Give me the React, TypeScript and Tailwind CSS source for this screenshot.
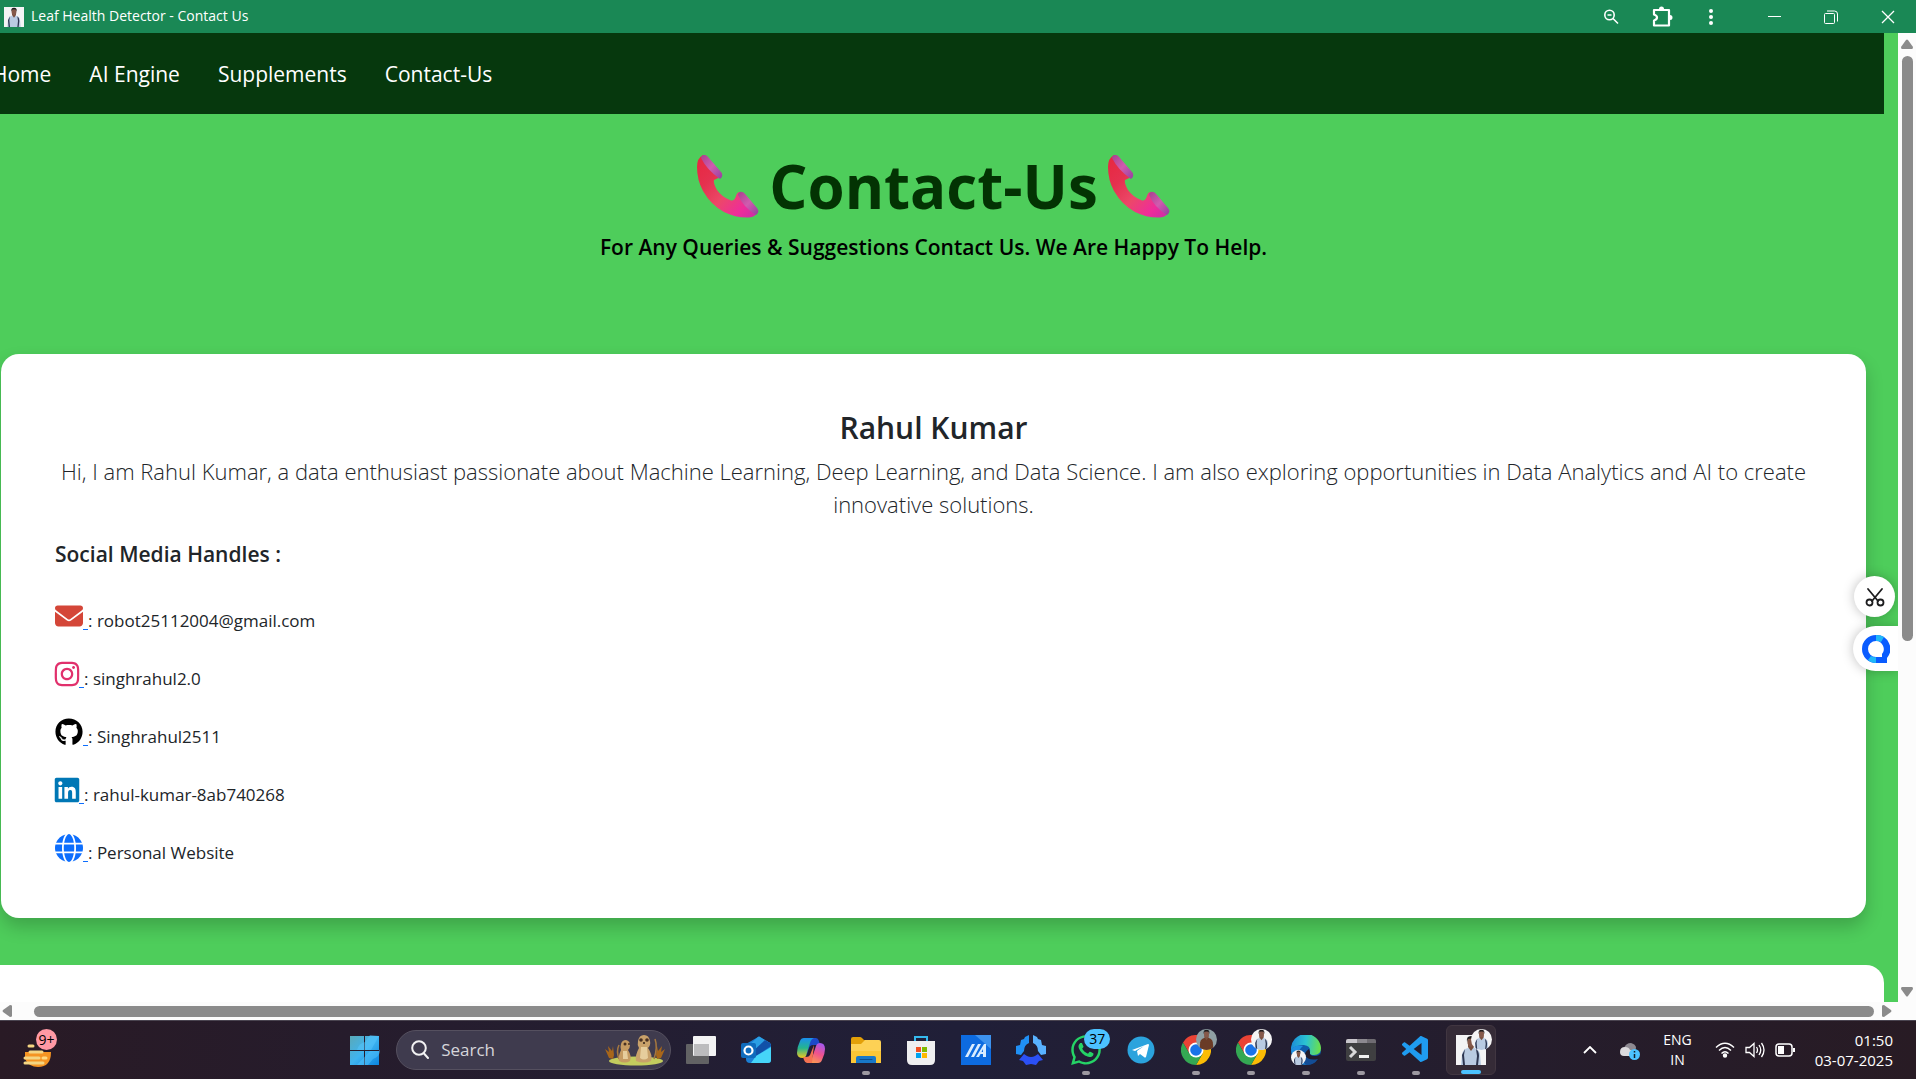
import React from "react";
import { FaEnvelope, FaGithub, FaGlobe, FaInstagram, FaLinkedin, FaWhatsapp } from "react-icons/fa6";
import { VscVscode } from "react-icons/vsc";

const navLinks = ["Home", "AI Engine", "Supplements", "Contact-Us"];

const socials = [
  { label: "Email", text: "robot25112004@gmail.com", icon: <FaEnvelope className="h-7 w-7 text-[#d44638]" /> },
  { label: "Instagram", text: "singhrahul2.0", icon: <FaInstagram className="-mx-0.5 h-7 w-7 text-[#e1306c]" /> },
  { label: "GitHub", text: "Singhrahul2511", icon: <FaGithub className="h-7 w-7 text-black" /> },
  { label: "LinkedIn", text: "rahul-kumar-8ab740268", icon: <FaLinkedin className="-mx-0.5 h-7 w-7 text-[#0077b5]" /> },
  { label: "Website", text: "Personal Website", icon: <FaGlobe className="h-7 w-7 text-[#0d6efd]" /> },
];

function Portrait({ className, brown = false }: { className: string; brown?: boolean }) {
  return (
    <svg viewBox="0 0 30 30" className={className} aria-hidden="true">
      <rect width="30" height="30" fill={brown ? "#8fa0a4" : "#f4f4f5"} />
      <path d="M5 30 6 19Q7 14 12 13h6q5 1 6 6l1 11Z" fill={brown ? "#6a3b26" : "#b9cbe2"} />
      {!brown && <path d="M9 14 8 20l1 10H7L6 20Z M20 14q3 2 3 7l-1 9h-2l1-9Z" fill="#2c3550" />}
      <path d="m12 12 3 4 3-4v-3h-6Z" fill="#79503f" />
      <ellipse cx="15" cy="7" rx="3.6" ry="5" fill="#85594a" />
      <path d="M11 7q-1-6 4-6t4 6l-1-3q-3-1-6 0Z" fill="#1d1a1b" />
    </svg>
  );
}

function Phone() {
  return (
    <svg viewBox="0 0 62 63" className="h-[63px] w-[62px]" aria-hidden="true">
      <defs>
        <linearGradient id="handset" x1="0" y1="0" x2="1" y2="1">
          <stop offset="0" stopColor="#e8263f" />
          <stop offset="0.3" stopColor="#e5314f" />
          <stop offset="0.55" stopColor="#ec4868" />
          <stop offset="0.8" stopColor="#ee2c9b" />
          <stop offset="1" stopColor="#c52fa8" />
        </linearGradient>
        <linearGradient id="cap" x1="0" y1="0" x2="1" y2="1">
          <stop offset="0" stopColor="#a8408f" />
          <stop offset="0.5" stopColor="#d05cae" />
          <stop offset="1" stopColor="#9440a0" />
        </linearGradient>
      </defs>
      <path d="M6 0Q0 3 0 12q0 13 6 24 8 14 21 21 12 6 25 5.500 6 0 9.500-6.500L43 37q-3 0-4 4-2 6-6 4-8-3-13-10-4-7-3-10 6-2 8-6.500Z" fill="url(#handset)" />
      <path d="M6 0q3-1 6 3l12 14q3 4-1 7Q10 15 4 3q0-2 2-3Z" fill="url(#cap)" />
      <path d="M43 37q3-1 6 3l11 13q3 4-1 7-13-8-18-20 0-2 2-3Z" fill="url(#cap)" />
    </svg>
  );
}

function Chrome() {
  return (
    <svg viewBox="0 0 30 30" className="h-[30px] w-[30px]" aria-hidden="true">
      <path d="M2 7.500A15 15 0 0 1 28 7.500H15L8.500 18.700Z" fill="#ea4335" />
      <path d="M28 7.500A15 15 0 0 1 15 30l6.500-11.200L15 7.500Z" fill="#fbbc05" />
      <path d="M15 30A15 15 0 0 1 2 7.500l6.500 11.200L21.500 18.800Z" fill="#34a853" />
      <circle cx="15" cy="15" r="7.500" fill="#fff" />
      <circle cx="15" cy="15" r="5.800" fill="#1a73e8" />
    </svg>
  );
}

function Edge() {
  return (
    <svg viewBox="0 0 30 30" className="h-[30px] w-[30px]" aria-hidden="true">
      <defs>
        <linearGradient id="edgeTop" x1="0" y1="0.300" x2="1" y2="0.400">
          <stop offset="0" stopColor="#1b8ad8" />
          <stop offset="0.5" stopColor="#2bc3d2" />
          <stop offset="1" stopColor="#6be04a" />
        </linearGradient>
      </defs>
      <circle cx="15" cy="15" r="15" fill="#0f5cab" />
      <path d="M0 15A15 15 0 0 1 30 13q0 7-7 7-5 0-4-3 1-6-6-7Q4 10 0 15Z" fill="url(#edgeTop)" />
      <path d="M0 15q4-6 12-4-5 4-4 9 2 8 10 9Q2 32 0 15Z" fill="#1f8fe0" />
      <path d="M19 17q-1 4 5 4 4 0 6-3-1 5-4 8-9 2-12-4-1-5 4-8Z" fill="#231c2b" />
      <path d="M14 20q3 6 13 4-4 6-11 6-6-2-2-10Z" fill="#134d96" />
    </svg>
  );
}

type Task = { name: string; icon: React.ReactNode; running?: boolean; active?: boolean; badge?: React.ReactNode };

const tasks: Task[] = [
  {
    name: "Task View",
    icon: (
      <svg viewBox="0 0 30 30" className="h-[30px] w-[30px]">
        <rect y="9" width="23" height="20" rx="1" fill="#626264" />
        <rect x="7" y="1" width="23" height="20" rx="1" fill="#f3f3f4" />
        <path d="M8 9h15v12H8Z" fill="#bcbcbe" />
      </svg>
    ),
  },
  {
    name: "Outlook",
    icon: (
      <svg viewBox="0 0 30 30" className="h-[30px] w-[30px]">
        <path d="M5 9 17 2q1-1 2 0l10 6q1 1 1 2v15q0 3-3 3H9q-4 0-4-4Z" fill="#1b7fd4" />
        <path d="M17 2q1-1 2 0l10 6-14 9-8-6Z" fill="#2b9fe4" />
        <path d="m29 8 1 3L15 21l-4-4 13-12Z" fill="#1151a8" />
        <path d="M30 12v13q0 3-3 3H10l5-7Z" fill="#46d5f8" />
        <rect y="8" width="15" height="15" rx="2" fill="#0f6cbd" />
        <circle cx="7.500" cy="15.500" r="4" fill="none" stroke="#fff" strokeWidth="2.200" />
      </svg>
    ),
  },
  {
    name: "Copilot",
    icon: (
      <svg viewBox="0 0 30 30" className="h-[30px] w-[30px]">
        <defs>
          <linearGradient id="copL" x1="0" y1="0" x2="0" y2="1">
            <stop offset="0" stopColor="#1a8ff0" />
            <stop offset="0.5" stopColor="#25b58d" />
            <stop offset="1" stopColor="#f2c81f" />
          </linearGradient>
          <linearGradient id="copR" x1="0.700" y1="0" x2="0.300" y2="1">
            <stop offset="0" stopColor="#a558ee" />
            <stop offset="0.5" stopColor="#f0528c" />
            <stop offset="1" stopColor="#fb9a52" />
          </linearGradient>
        </defs>
        <path d="M14 3h6q2 0 3 3l1 4h-7q-3 0-4 3l-3 9Z" fill="#1d49c8" />
        <path d="M8 3h10q-3 1-4 5l-4 13q-1 2-3 2-6 0-6-5 0-6 3-12 1-3 4-3Z" fill="url(#copL)" />
        <path d="M22 28H12q3-1 4-5l4-12q1-3 4-3 5 0 5 6 0 5-3 11-1 3-4 3Z" fill="url(#copR)" />
        <path d="M16 28h-5q-2 0-3-3l-1-3h3q3 0 4-2l4-10Z" fill="#f47252" />
      </svg>
    ),
  },
  {
    name: "File Explorer",
    running: true,
    icon: (
      <svg viewBox="0 0 30 30" className="h-[30px] w-[30px]">
        <path d="M0 4q0-2 2-2h7q1 0 2 1l2 2H0Z M0 5h14v5H0Z" fill="#e3a008" />
        <path d="M0 9h10l4-4h14q2 0 2 2v21H0Z" fill="#fdd155" />
        <path d="M0 16h30v12H0Z" fill="#fbc636" />
        <path d="M5 28v-5q0-2 2-2h16q2 0 2 2v5Z" fill="#1878c8" />
        <path d="M9 24.500h12" stroke="#0b4f91" strokeLinecap="round" />
      </svg>
    ),
  },
  {
    name: "Microsoft Store",
    icon: (
      <svg viewBox="0 0 30 30" className="h-[30px] w-[30px]">
        <path d="M9 8V2h12v6" fill="none" stroke="#35b9ee" strokeWidth="2" />
        <path d="M1 6h28v19q0 5-5 5H6q-5 0-5-5Z" fill="#efeff0" />
        <path d="M10 12h5v5h-5Z" fill="#f25022" />
        <path d="M16 12h5v5h-5Z" fill="#7fba00" />
        <path d="M10 18h5v5h-5Z" fill="#00a4ef" />
        <path d="M16 18h5v5h-5Z" fill="#ffb900" />
      </svg>
    ),
  },
  {
    name: "MyASUS",
    icon: (
      <svg viewBox="0 0 30 30" className="h-[30px] w-[30px]">
        <rect width="30" height="30" fill="#0d6be0" />
        <path d="M14 0h16v14Z" fill="#3d92ee" />
        <path d="m4 22 7-13h3L7 22Zm6 0 7-13h3l-7 13Zm5 0 8-13h2v13h-3v-8l-4 8Zm3-5h6v2h-7Z" fill="#d9ecff" />
      </svg>
    ),
  },
  {
    name: "Armoury",
    icon: (
      <svg viewBox="0 0 30 30" className="h-[30px] w-[30px]">
        <path d="M9 2l4-2v8q-5 2-5 8l-3 4-5-1v-8l4-1 1-5 3-1Z" fill="#2090f5" />
        <path d="M21 2l-4-2v8q5 2 5 8l3 4 5-1v-8l-4-1-1-5-3-1Z" fill="#58b2ff" />
        <path d="m8 19 3 2q4 2 8 0l3-2 5 6-4 1-3 4-5-1-5 1-3-4-4-1Z" fill="#2b50f5" />
      </svg>
    ),
  },
  {
    name: "WhatsApp",
    running: true,
    icon: <FaWhatsapp className="h-[34px] w-[34px] shrink-0 text-[#25d366]" />,
    badge: (
      <span className="absolute -top-[6px] left-[13px] flex h-5 w-[26px] items-center justify-center rounded-full bg-[#4cc2ff] text-sm leading-5 text-black">37</span>
    ),
  },
  {
    name: "Telegram",
    icon: (
      <svg viewBox="0 0 28 28" className="h-7 w-7">
        <circle cx="14" cy="14" r="13.500" fill="#2ba3dd" />
        <path d="m5 14 16-6q1 0 1 1l-3 12q-1 1-2 0l-4-3-2 2-1-5 7-5-9 5-3-1Z" fill="#fff" />
      </svg>
    ),
  },
  { name: "Chrome work profile", running: true, icon: <Chrome />, badge: <Portrait brown className="absolute -top-[6px] left-[15px] h-[21px] w-[21px] rounded-full" /> },
  { name: "Chrome", running: true, icon: <Chrome />, badge: <Portrait className="absolute -top-[6px] left-[15px] h-[21px] w-[21px] rounded-full" /> },
  { name: "Edge", running: true, icon: <Edge />, badge: <Portrait className="absolute top-[15px] left-0 h-[15px] w-[15px] rounded-full" /> },
  {
    name: "Terminal",
    running: true,
    icon: (
      <svg viewBox="0 0 30 30" className="h-[30px] w-[30px]">
        <rect y="4" width="30" height="22" rx="2" fill="#3f3f41" />
        <path d="M0 8V6q0-2 2-2h9v4Z" fill="#c9c6cc" />
        <path d="M11 4h10v4H11Z" fill="#8c898f" />
        <path d="M21 4h7q2 0 2 2v2h-9Z" fill="#6f6c72" />
        <path d="m4 12 5 5-5 5" fill="none" stroke="#d8d8d9" strokeWidth="3" />
        <path d="M13 20h10v3H13Z" fill="#f1f1f1" />
      </svg>
    ),
  },
  { name: "Visual Studio Code", running: true, icon: <VscVscode className="h-8 w-8 shrink-0 text-[#1f9cf0]" /> },
  {
    name: "Leaf Health Detector",
    active: true,
    icon: <Portrait className="h-[30px] w-[30px]" />,
    badge: <Portrait className="absolute -top-[6px] left-[15px] h-[21px] w-[21px] rounded-full" />,
  },
];

function TitleBar() {
  return (
    <header className="flex h-[33px] shrink-0 items-center bg-[#1a8855] text-white">
      <Portrait className="ml-1 h-5 w-5" />
      <span className="mb-0.5 ml-[7px] text-sm">Leaf Health Detector - Contact Us</span>
      <div className="mr-[21px] ml-auto flex items-center">
        <button aria-label="Zoom" className="mr-8">
          <svg viewBox="0 0 16 16" className="h-4 w-4" fill="none" stroke="currentColor" strokeWidth="1.600">
            <circle cx="6.500" cy="6" r="4.700" />
            <path d="m10 9.500 5 5M4.500 6h4" />
          </svg>
        </button>
        <button aria-label="Extensions" className="mr-[35px]">
          <svg viewBox="0 0 22 22" className="h-[22px] w-[22px]" fill="none" stroke="currentColor" strokeWidth="2.200" strokeLinejoin="round">
            <path d="M3 4h15v15.500H3v-5q3-1 3-3t-3-3Z" />
            <path d="M8 3q0-2.500 2.500-2.500T13 3ZM19 9q2.500 0 2.500 2.500T19 14Z" fill="currentColor" stroke="none" />
          </svg>
        </button>
        <button aria-label="Menu" className="mr-[54px]">
          <svg viewBox="0 0 6 18" className="h-[18px] w-[6px]" fill="currentColor">
            <circle cx="3" cy="3" r="2" />
            <circle cx="3" cy="9" r="2" />
            <circle cx="3" cy="15" r="2" />
          </svg>
        </button>
        <button aria-label="Minimize" className="mr-[42px]">
          <svg viewBox="0 0 14 14" className="h-[14px] w-[14px]" stroke="currentColor">
            <path d="M0 6.500h13" />
          </svg>
        </button>
        <button aria-label="Restore" className="mr-[43px]">
          <svg viewBox="0 0 14 14" className="h-[14px] w-[14px]" fill="none" stroke="currentColor">
            <rect x="0.500" y="3.500" width="10" height="10" rx="1" />
            <path d="M3 1h7.500q3 0 3 3v7.500" />
          </svg>
        </button>
        <button aria-label="Close">
          <svg viewBox="0 0 14 14" className="h-[14px] w-[14px]" stroke="currentColor" strokeWidth="1.300">
            <path d="m1 1 12 12M13 1 1 13" />
          </svg>
        </button>
      </div>
    </header>
  );
}

function ContactPage() {
  return (
    <div className="relative min-w-0 flex-1 overflow-hidden bg-[#4ecd5b]">
      <nav className="mr-[14px] flex h-[81px] items-center gap-[38px] bg-[#06380d] pt-0.5 text-[21px] text-white">
        {navLinks.map((l) => (
          <a key={l} href="#" className="first:-ml-2">{l}</a>
        ))}
      </nav>
      <section className="mr-8 ml-px flex flex-col items-center pt-9 text-center">
        <h1 className="flex items-center gap-[10px] text-6xl leading-[72px] font-bold text-[#033303]">
          <Phone />
          Contact-Us
          <Phone />
        </h1>
        <p className="mt-[9px] text-[21px] leading-[33px] font-semibold text-black">
          For Any Queries &amp; Suggestions Contact Us. We Are Happy To Help.
        </p>
      </section>
      <section className="mt-[90px] mr-8 ml-px rounded-[18px] bg-white px-[54px] pt-[54px] pb-[41px] text-[#212529] shadow-[0_9px_18px_rgba(0,0,0,0.2)]">
        <h2 className="text-center text-3xl leading-10 font-semibold">Rahul Kumar</h2>
        <p className="mt-[7px] text-center text-[22px] leading-[33px] font-light">
          Hi, I am Rahul Kumar, a data enthusiast passionate about Machine Learning, Deep Learning, and Data Science. I am also exploring opportunities in Data Analytics and AI to create innovative solutions.
        </p>
        <h3 className="mt-[17px] text-[21px] leading-[33px] font-semibold">Social Media Handles :</h3>
        <ul className="mt-4">
          {socials.map((s) => (
            <li key={s.label} className="flex h-[58px] items-center text-[17px]">
              <a href="#" aria-label={s.label} className="flex items-end text-[#0d6efd]">
                {s.icon}
                <span className="h-px w-[5px] bg-current" />
              </a>
              <span className="mt-[10px]">: {s.text}</span>
            </li>
          ))}
        </ul>
      </section>
      <section className="mt-[47px] mr-[14px] h-60 rounded-tr-[18px] bg-white" />
      <button aria-label="Screenshot" className="absolute top-[543px] right-[3px] flex h-[41px] w-[41px] items-center justify-center rounded-full bg-white shadow-[0_0_12px_rgba(0,0,0,0.25)]">
        <svg viewBox="0 0 20 20" className="h-5 w-5" fill="none" stroke="#1c1c1e" strokeWidth="1.800" strokeLinecap="round">
          <path d="m3 2 10 12M17 2 7 14" />
          <circle cx="4.500" cy="15.500" r="3" />
          <circle cx="15.500" cy="15.500" r="3" />
        </svg>
      </button>
      <button aria-label="Assistant" className="absolute top-[593px] right-0 flex h-[45px] w-[45px] items-center rounded-l-full bg-white pl-[9px] shadow-[0_0_12px_rgba(0,0,0,0.25)]">
        <svg viewBox="0 0 28 28" className="h-7 w-7">
          <path d="M14 0a14 14 0 1 0 0 28h11v-5A14 14 0 0 0 14 0Z" fill="#0a5cff" />
          <path d="M14 0q5 0 8 2l-3 5q-3-1.500-5-1Z M6 25l3-4q3 2 5 1v6q-5 0-8-3Z" fill="#20b8f8" />
          <path d="M14 6a8 8 0 1 0 0 16h6v-3A8 8 0 0 0 14 6Z" fill="#fff" />
        </svg>
      </button>
    </div>
  );
}

function VerticalScrollbar() {
  return (
    <div className="flex w-[18px] flex-col items-center bg-[#fcfcfc] text-[#8b8b8b]">
      <svg viewBox="0 0 12 10" className="mt-[6px] h-[10px] w-3" fill="currentColor">
        <path d="M5 1q1-1 2 0l5 7q0 2-1 2H1Q0 10 0 8Z" />
      </svg>
      <div className="mt-[7px] h-[60.4%] w-[11px] rounded-full bg-current" />
      <svg viewBox="0 0 12 10" className="mt-auto mb-[5px] h-[10px] w-3" fill="currentColor">
        <path d="M5 9q1 1 2 0l5-7q0-2-1-2H1Q0 0 0 2Z" />
      </svg>
    </div>
  );
}

function HorizontalScrollbar() {
  return (
    <div className="flex h-[18px] shrink-0 items-center bg-[#fcfcfc] pr-6 pl-[2px] text-[#8b8b8b]">
      <svg viewBox="0 0 10 12" className="h-3 w-[10px]" fill="currentColor">
        <path d="M1 5q-1 1 0 2l7 5q2 0 2-1V1q0-1-2-1Z" />
      </svg>
      <div className="mr-2 ml-[22px] h-[11px] flex-1 rounded-full bg-current" />
      <svg viewBox="0 0 10 12" className="h-3 w-[10px]" fill="currentColor">
        <path d="M9 5q1 1 0 2l-7 5q-2 0-2-1V1q0-1 2-1Z" />
      </svg>
    </div>
  );
}

function Taskbar() {
  return (
    <footer className="flex h-[59px] shrink-0 items-center border-t border-[#4a4450] bg-linear-to-r from-[#291a25] via-[#201f38] to-[#281b24] text-white">
      <button aria-label="Widgets" className="relative ml-[21px] h-9 w-9">
        <svg viewBox="0 0 36 36" className="h-9 w-9">
          <path d="M4 20h26q0 15-13 15-9 0-13-8Z" fill="#f59422" />
          <path d="M8 14h4M9 20h12M4 26h14M4 31h18" stroke="#f4d582" strokeWidth="3" strokeLinecap="round" />
          <path d="M22 26h3" stroke="#ffd980" strokeWidth="3" strokeLinecap="round" />
        </svg>
        <span className="absolute -top-[3px] right-0 flex h-[21px] w-[21px] items-center justify-center rounded-full bg-[#ff99a4] text-sm leading-5 text-black">9+</span>
      </button>
      <div className="ml-auto flex items-center">
        <button aria-label="Start" className="mr-4">
          <svg viewBox="0 0 30 30" className="h-[30px] w-[30px]">
            <defs>
              <linearGradient id="win" x1="0" y1="0" x2="1" y2="1">
                <stop offset="0" stopColor="#5aa9b8" />
                <stop offset="0.5" stopColor="#3fb4ef" />
                <stop offset="1" stopColor="#0a85e0" />
              </linearGradient>
            </defs>
            <path d="M0 1h14v14H0ZM15 1h14v14H15ZM0 16h14v14H0ZM15 16h14v14H15Z" fill="url(#win)" />
            <path d="M20 0 29 1 21 15H7Q9 8 15 7ZM20 16h9Q31 12 30 16q0 5-7 8l-5 6H7Z" fill="#58c8ff" opacity="0.450" />
          </svg>
        </button>
        <label className="mr-[15px] flex h-10 w-[275px] items-center rounded-full border border-[#55505f] bg-[#3f3b4e] pl-[14px]">
          <svg viewBox="0 0 18 20" className="h-5 w-[18px] shrink-0" fill="none" stroke="#f2f2f3" strokeWidth="2" strokeLinecap="round">
            <circle cx="8" cy="8" r="6.800" />
            <path d="m13 13.500 4 4.500" />
          </svg>
          <input aria-label="Search" placeholder="Search" className="ml-3 w-0 flex-1 bg-transparent text-[17px] outline-none placeholder:text-[#d6d5da]" />
          <svg viewBox="0 0 60 32" className="mr-[5px] h-8 w-[60px] shrink-0">
            <ellipse cx="31" cy="27" rx="27" ry="4.500" fill="#c3cc5e" />
            <path d="m4 24-4-9 4 3-1-6 4 5 1-5 1 9-1 4Zm52 0 4-9-4 3 1-6-4 5-1-5-1 9 1 4Z" fill="#a8661a" />
            <path d="M49 25q4-12 1-20M14 25q-3-8 0-14" stroke="#a6783f" strokeWidth="1.500" fill="none" />
            <path d="M31 27q-1-6 3-13-2-3-1-7 1-6 6-6t6 6q1 4-2 7 5 7 3 13-7 3-15 0Z" fill="#c8a16a" />
            <path d="M14 27q-1-5 2-11-1-3 0-6 1-4 5-4 4 1 4 5 0 3-2 5 4 6 2 11-5 3-11 0Z" fill="#c59b62" />
            <path d="M36 13h6l1 11q-4 3-8 0Zm-18 4h4l1 8h-5Z" fill="#e6cd9c" />
            <circle cx="36" cy="6" r="1.800" fill="#493122" />
            <circle cx="42" cy="6" r="1.800" fill="#493122" />
            <circle cx="20" cy="10" r="1.500" fill="#493122" />
            <circle cx="24" cy="10" r="1" fill="#493122" />
            <circle cx="39" cy="9" r="1" fill="#2f2019" />
          </svg>
        </label>
        <div className="-ml-[10px] flex items-center gap-[5px]">
          {tasks.map((t) => (
            <button
              key={t.name}
              aria-label={t.name}
              className={
                t.active
                  ? "relative flex h-[50px] w-[50px] items-center justify-center rounded-md border border-[#413641] bg-[#352b37]"
                  : "relative flex h-[50px] w-[50px] items-center justify-center"
              }
            >
              <span className="relative flex h-[30px] w-[30px] items-center justify-center">
                {t.icon}
                {t.badge}
              </span>
              {t.running && <span className="absolute bottom-0 h-1 w-2 rounded-full bg-[#9d99a1]" />}
              {t.active && <span className="absolute bottom-0 h-1 w-5 rounded-full bg-[#4cc2ff]" />}
            </button>
          ))}
        </div>
      </div>
      <div className="mr-[23px] ml-[87px] flex items-center">
        <button aria-label="Show hidden icons">
          <svg viewBox="0 0 14 8" className="h-2 w-[14px]" fill="none" stroke="currentColor" strokeWidth="1.800">
            <path d="m1 7 6-6 6 6" />
          </svg>
        </button>
        <svg viewBox="0 0 20 18" className="mt-[2px] ml-[23px] h-[18px] w-5" aria-hidden="true">
          <path d="M4 6q2-5 7-5 4 1 5 4 0 5-4 7L4 8Z" fill="#8d8991" />
          <path d="M0 10q0-5 5-5 4 0 5 3l4 1v5H4q-4 0-4-4Z" fill="#dcdadd" />
          <circle cx="14.500" cy="12.500" r="5.500" fill="#4cc2ff" />
          <path d="M14.500 9v1.500M14.500 12v4" stroke="#15202a" strokeWidth="1.500" />
        </svg>
        <button className="ml-[23px] text-center text-sm leading-5">
          ENG
          <br />
          IN
        </button>
        <button aria-label="Network, volume and battery" className="ml-[23px] flex items-center gap-[10px]">
          <svg viewBox="0 0 20 16" className="h-4 w-5" fill="none" stroke="currentColor" strokeWidth="1.400">
            <path d="M1 5.500q9-8.500 18 0M4 8.500q6-6 12 0M6.500 11.500q3.500-3.500 7 0" />
            <circle cx="10" cy="13.500" r="1.500" fill="currentColor" />
          </svg>
          <svg viewBox="0 0 20 18" className="h-[18px] w-5" fill="none" stroke="currentColor" strokeWidth="1.300">
            <path d="M1 6.500h3.500L9 2.500v13l-4.500-4H1ZM11.500 6q2 3 0 6M14 4q3.500 5 0 10M16.500 2q5 7 0 14" />
          </svg>
          <svg viewBox="0 0 20 14" className="h-[14px] w-5" fill="none" stroke="currentColor" strokeWidth="1.500">
            <rect x="1" y="1" width="16" height="12" rx="3" />
            <path d="M3 3h6v8H3ZM18 5h2v4h-2Z" fill="currentColor" stroke="none" />
          </svg>
        </button>
        <time dateTime="2025-07-03T01:50" className="ml-5 text-right text-[15px] leading-5">
          01:50
          <br />
          03-07-2025
        </time>
      </div>
    </footer>
  );
}

export default function App() {
  return (
    <div className="flex h-screen flex-col overflow-hidden font-['Open_Sans','Noto_Sans',sans-serif]">
      <TitleBar />
      <main className="flex min-h-0 flex-1">
        <ContactPage />
        <VerticalScrollbar />
      </main>
      <HorizontalScrollbar />
      <Taskbar />
    </div>
  );
}
